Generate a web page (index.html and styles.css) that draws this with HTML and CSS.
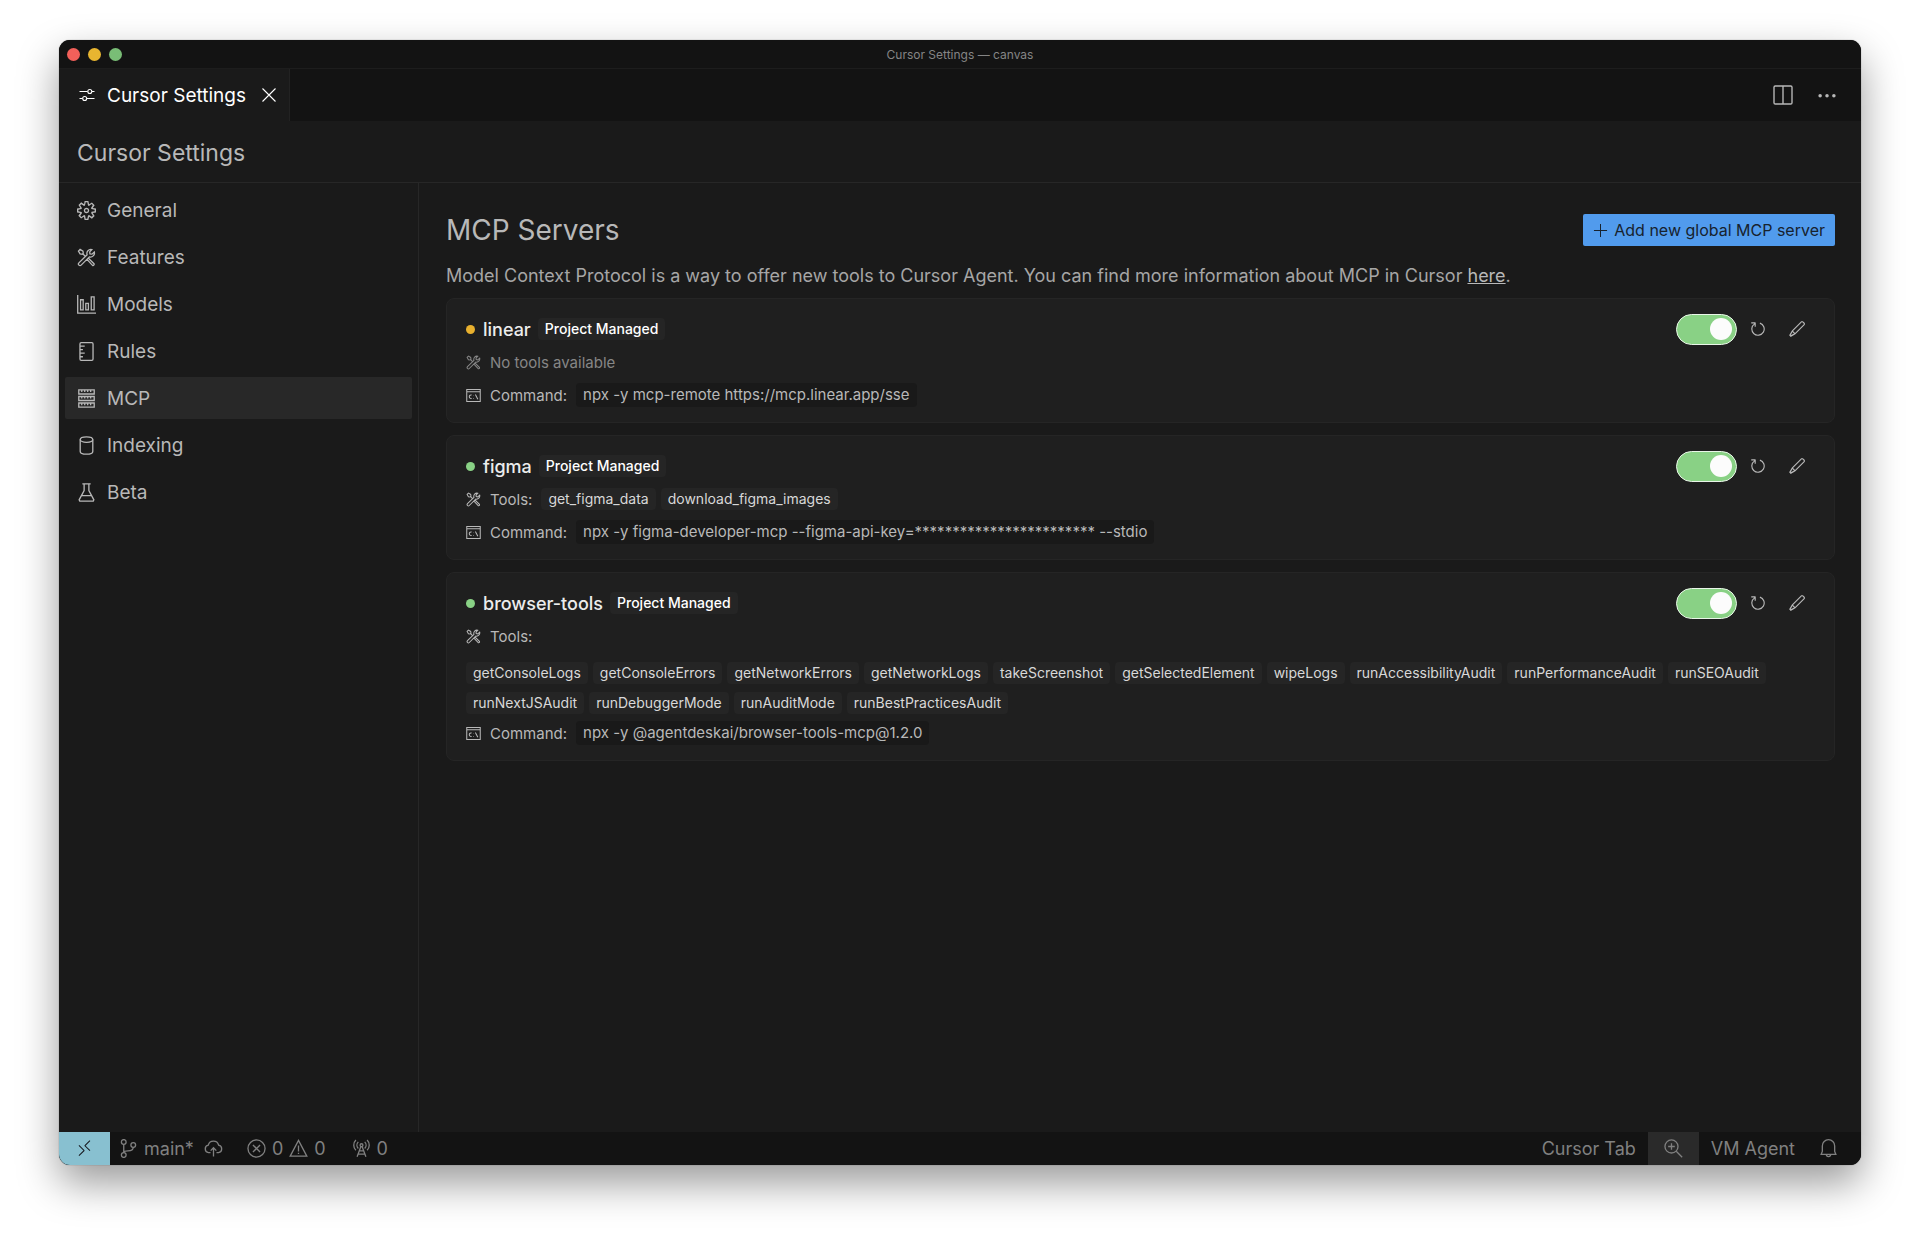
FILE: index.html
```html
<!DOCTYPE html>
<html lang="en">
<head>
    <meta charset="UTF-8">
    <meta name="viewport" content="width=device-width, initial-scale=1.0">
    <title>Cursor Settings — canvas</title>
    <link rel="stylesheet" href="styles.css">
</head>
<body>

<!-- shared icons -->
<svg class="sprite" aria-hidden="true">
    <symbol id="tools" viewBox="0 0 16 16">
        <path class="line" d="M1.2 2.6 2.6 1.2 5 2.6 5.3 4.4 4.4 5.3 2.6 5zM5 5l2 2M9.2 8.2 14.3 13.2a1 1 0 0 1-1.3 1.4L8.2 9.4M14.6 3.4 12.6 5.2 10.9 4.9 10.7 3.3 12.5 1.3a3.4 3.4 0 0 0-4 4.4L1.6 12.5a1.3 1.3 0 0 0 1.9 1.9l6.9-6.9a3.4 3.4 0 0 0 4.2-4.1z"/>
    </symbol>
    <symbol id="terminal" viewBox="0 0 16 16">
        <path class="line" d="M.8 1.5h14.4v13H.8zM.8 4h14.4M6 7.5a1.9 1.9 0 1 0 0 3.6M8 7.6v.5M8 10.6v.5M10 7l2.6 5"/>
    </symbol>
    <symbol id="refresh" viewBox="0 0 16 16">
        <path d="M4.681 3H2V2h3.5l.5.5V6H5V4a5 5 0 1 0 4.53-.761l.302-.954A6 6 0 1 1 4.681 3z"/>
    </symbol>
    <symbol id="pencil" viewBox="0 0 16 16">
        <path d="M13.23 1h-1.46L3.52 9.25l-.16.22L1 13.59 2.41 15l4.12-2.36.22-.16L15 4.23V2.77L13.23 1zM2.41 13.59l1.51-3 1.45 1.45-2.96 1.55zm3.83-2.06L4.47 9.76l8-8 1.77 1.77-8 8z"/>
    </symbol>
</svg>

<div class="window">
    <header class="titlebar">
        <div class="lights">
            <span class="light red"></span>
            <span class="light yellow"></span>
            <span class="light green"></span>
        </div>
        <span class="window-title">Cursor Settings — canvas</span>
    </header>

    <div class="tabs">
        <div class="tab">
            <svg class="icon small" viewBox="0 0 16 16"><path class="line" d="M.5 4.5h8M13 4.5h2.5M.5 11.5h3M8 11.5h7.5"/><circle class="line" cx="10.8" cy="4.5" r="2"/><circle class="line" cx="5.7" cy="11.5" r="2"/></svg>
            <span>Cursor Settings</span>
            <button class="icon-button" aria-label="Close"><svg class="icon small" viewBox="0 0 16 16"><path class="line" d="M1.5 1.5l13 13M14.5 1.5l-13 13"/></svg></button>
        </div>
        <div class="tab-actions">
            <button class="icon-button" aria-label="Split editor"><svg class="icon large" viewBox="0 0 16 16"><rect class="line" x=".8" y=".8" width="14.4" height="14.4" rx="1"/><path class="line" d="M8 .8v14.4"/></svg></button>
            <button class="icon-button" aria-label="More"><svg class="icon large" viewBox="0 0 16 16"><circle cx="2.5" cy="8.5" r="1.4"/><circle cx="8" cy="8.5" r="1.4"/><circle cx="13.5" cy="8.5" r="1.4"/></svg></button>
        </div>
    </div>

    <div class="page-header">Cursor Settings</div>

    <div class="body">
        <nav class="sidebar">
            <button class="nav-item">
                <svg class="icon" viewBox="1 1 14 14"><path d="M9.1 4.4L8.6 2H7.4l-.5 2.4-.7.3-2-1.3-.9.8 1.3 2-.2.7-2.4.5v1.2l2.4.5.3.8-1.3 2 .8.8 2-1.3.8.3.4 2.3h1.2l.5-2.4.8-.3 2 1.3.8-.8-1.3-2 .3-.8 2.3-.4V7.4l-2.4-.5-.3-.8 1.3-2-.8-.8-2 1.3-.7-.2zM9.4 1l.5 2.4L12 2.1l2 2-1.4 2.1 2.4.4v2.8l-2.4.5L14 12l-2 2-2.1-1.4-.5 2.4H6.6l-.5-2.4L4 13.9l-2-2 1.4-2.1L1 9.4V6.6l2.4-.5L2.1 4l2-2 2.1 1.4.4-2.4h2.8zm.6 7c0 1.1-.9 2-2 2s-2-.9-2-2 .9-2 2-2 2 .9 2 2zM8 9c.6 0 1-.4 1-1s-.4-1-1-1-1 .4-1 1 .4 1 1 1z"/></svg>
                General
            </button>
            <button class="nav-item">
                <svg class="icon"><use href="#tools"/></svg>
                Features
            </button>
            <button class="nav-item">
                <svg class="icon" viewBox="0 0 16 16"><path class="line" d="M.6 0v15.2H16M3 4h2.2v8.6H3zM7.4 7h2.2v5.6H7.4zM12 1.5h2.4v11.1H12z"/></svg>
                Models
            </button>
            <button class="nav-item">
                <svg class="icon" viewBox="0 0 16 16"><rect class="line" x="2.5" y=".6" width="11" height="14.8" rx="1"/><path class="line" d="M2.5 3.4h4M2.5 6.4h2.5M2.5 9.4h4M2.5 12.4h2.5"/></svg>
                Rules
            </button>
            <button class="nav-item active">
                <svg class="icon" viewBox="0 0 16 16"><path class="line" d="M1.5.8h13v3.4h-13zM1.5 6.3h13v3.4h-13zM1.5 11.8h13v3.4h-13zM4 1v1.6M6.5 1v1.6M9 1v1.6M11.5 1v1.6M4 6.5v1.6M6.5 6.5v1.6M9 6.5v1.6M11.5 6.5v1.6M4 12v1.6M6.5 12v1.6M9 12v1.6M11.5 12v1.6"/></svg>
                MCP
            </button>
            <button class="nav-item">
                <svg class="icon" viewBox="0 0 16 16"><ellipse class="line" cx="8" cy="3" rx="5.3" ry="2.3"/><path class="line" d="M2.7 3v10c0 1.3 2.3 2.3 5.3 2.3s5.3-1 5.3-2.3V3"/></svg>
                Indexing
            </button>
            <button class="nav-item">
                <svg class="icon" viewBox="0 0 16 16"><path class="line" d="M4.5.7h7M6 .7v5.6L1.8 14.2l.5 1h11.4l.5-1L10 6.3V.7M4 10.7h8"/></svg>
                Beta
            </button>
        </nav>

        <main class="content">
            <div class="heading">
                <h1>MCP Servers</h1>
                <button class="add-button">
                    <svg class="icon tiny" viewBox="0 0 16 16"><path class="line" d="M8 1v14M1 8h14"/></svg>
                    Add new global MCP server
                </button>
            </div>
            <p class="intro">Model Context Protocol is a way to offer new tools to Cursor Agent. You can find more information about MCP in Cursor <a href="#">here</a>.</p>

            <section class="server">
                <div class="server-head">
                    <span class="dot waiting"></span>
                    <h2>linear</h2>
                    <span class="tag managed">Project Managed</span>
                    <div class="actions">
                        <input type="checkbox" class="toggle" aria-label="Enable linear" checked>
                        <button class="icon-button" aria-label="Refresh"><svg class="icon action"><use href="#refresh"/></svg></button>
                        <button class="icon-button" aria-label="Edit"><svg class="icon action"><use href="#pencil"/></svg></button>
                    </div>
                </div>
                <div class="row muted">
                    <svg class="icon tiny"><use href="#tools"/></svg>
                    <span>No tools available</span>
                </div>
                <div class="row">
                    <svg class="icon tiny"><use href="#terminal"/></svg>
                    <span>Command:</span>
                    <span class="command">npx -y mcp-remote https://mcp.linear.app/sse</span>
                </div>
            </section>

            <section class="server">
                <div class="server-head">
                    <span class="dot"></span>
                    <h2>figma</h2>
                    <span class="tag managed">Project Managed</span>
                    <div class="actions">
                        <input type="checkbox" class="toggle" aria-label="Enable figma" checked>
                        <button class="icon-button" aria-label="Refresh"><svg class="icon action"><use href="#refresh"/></svg></button>
                        <button class="icon-button" aria-label="Edit"><svg class="icon action"><use href="#pencil"/></svg></button>
                    </div>
                </div>
                <div class="row">
                    <svg class="icon tiny"><use href="#tools"/></svg>
                    <span>Tools:</span>
                    <div class="tag-list">
                        <span class="tag">get_figma_data</span>
                        <span class="tag">download_figma_images</span>
                    </div>
                </div>
                <div class="row">
                    <svg class="icon tiny"><use href="#terminal"/></svg>
                    <span>Command:</span>
                    <span class="command">npx -y figma-developer-mcp --figma-api-key=************************ --stdio</span>
                </div>
            </section>

            <section class="server">
                <div class="server-head">
                    <span class="dot"></span>
                    <h2>browser-tools</h2>
                    <span class="tag managed">Project Managed</span>
                    <div class="actions">
                        <input type="checkbox" class="toggle" aria-label="Enable browser-tools" checked>
                        <button class="icon-button" aria-label="Refresh"><svg class="icon action"><use href="#refresh"/></svg></button>
                        <button class="icon-button" aria-label="Edit"><svg class="icon action"><use href="#pencil"/></svg></button>
                    </div>
                </div>
                <div class="row">
                    <svg class="icon tiny"><use href="#tools"/></svg>
                    <span>Tools:</span>
                </div>
                <div class="tag-list wide">
                    <span class="tag">getConsoleLogs</span>
                    <span class="tag">getConsoleErrors</span>
                    <span class="tag">getNetworkErrors</span>
                    <span class="tag">getNetworkLogs</span>
                    <span class="tag">takeScreenshot</span>
                    <span class="tag">getSelectedElement</span>
                    <span class="tag">wipeLogs</span>
                    <span class="tag">runAccessibilityAudit</span>
                    <span class="tag">runPerformanceAudit</span>
                    <span class="tag">runSEOAudit</span>
                    <span class="tag">runNextJSAudit</span>
                    <span class="tag">runDebuggerMode</span>
                    <span class="tag">runAuditMode</span>
                    <span class="tag">runBestPracticesAudit</span>
                </div>
                <div class="row">
                    <svg class="icon tiny"><use href="#terminal"/></svg>
                    <span>Command:</span>
                    <span class="command">npx -y @agentdeskai/browser-tools-mcp@1.2.0</span>
                </div>
            </section>
        </main>
    </div>

    <footer class="statusbar">
        <button class="status remote" aria-label="Remote"><svg class="icon" viewBox="0 0 16 16"><path d="M12.904 9.57L8.928 5.596l3.976-3.976-.619-.62L8 5.286v.619l4.285 4.285.62-.618zM3 5.62l4.072 4.07L3 13.763l.619.618L8 10v-.619L3.619 5 3 5.619z"/></svg></button>
        <button class="status branch">
            <svg class="icon" viewBox="0 0 16 16"><circle class="line" cx="4" cy="2.5" r="2"/><circle class="line" cx="4" cy="13.5" r="2"/><circle class="line" cx="12" cy="5" r="2"/><path class="line" d="M4 4.5v7M12 7c0 2.5-2 3-4.5 3-2 0-3.3.4-3.5 1.5"/></svg>
            main*
        </button>
        <button class="status publish" aria-label="Publish changes"><svg class="icon" viewBox="0 0 16 16"><path class="line" d="M5.5 11.5H3.8A3.2 3.2 0 0 1 3.6 5.2a4.5 4.5 0 0 1 8.7 0A3.2 3.2 0 0 1 12.2 11.500h-1.700M8 14.800V7.500M5.600 9.800 8 7.400l2.400 2.400"/></svg></button>
        <button class="status problems">
            <svg class="icon" viewBox="0 0 16 16"><circle class="line" cx="8" cy="8" r="7.2"/><path class="line" d="M5 5l6 6M11 5l-6 6"/></svg>
            0
            <svg class="icon" viewBox="0 0 16 16"><path class="line" d="M8 1.200 15 14.500H1zM8 5.500v5M8 11.500v1.200"/></svg>
            0
        </button>
        <button class="status">
            <svg class="icon" viewBox="0 0 16 16"><circle class="line" cx="8" cy="5.2" r="1.2"/><path class="line" d="M7.5 6.4 4.3 15M8.5 6.4l3.2 8.6M6.2 10h3.6M5.2 12.7h5.6M5.3 8a4 4 0 0 1 0-5.6M10.7 8a4 4 0 0 0 0-5.6M3.3 9.5a6 6 0 0 1 0-8.6M12.7 9.5a6 6 0 0 0 0-8.6"/></svg>
            0
        </button>
        <div class="status-right">
            <button class="status">Cursor Tab</button>
            <button class="status zoom" aria-label="Zoom in"><svg class="icon" viewBox="0 0 16 16"><circle class="line" cx="6.3" cy="6.3" r="5.5"/><path class="line" d="M10.3 10.3l5 5M6.3 3.5v5.6M3.5 6.3h5.6"/></svg></button>
            <button class="status">VM Agent</button>
            <button class="status bell" aria-label="Notifications"><svg class="icon" viewBox="0 0 16 16"><path class="line" d="M1.8 13h12.4l-1-2.500V5.800a5.200 5.200 0 0 0-10.400 0v4.700zM6.200 13a1.800 1.800 0 0 0 3.600 0"/></svg></button>
        </div>
    </footer>
</div>

</body>
</html>
```
FILE: styles.css
```css
* {
    box-sizing: border-box;
}

body {
    margin: 0;
    padding: 40px 59px 78px;
    min-height: 100vh;
    display: flex;
    background-color: #fff;
    font-family: Inter, "Liberation Sans", sans-serif;
    font-size: 16px;
    color: #b8b8b8;
}

h1, h2, p {
    margin: 0;
    font-weight: 400;
}

button {
    margin: 0;
    padding: 0;
    border: none;
    background: none;
    color: inherit;
    font: inherit;
    cursor: pointer;
}

.sprite {
    display: none;
}

.icon {
    display: block;
    flex-shrink: 0;
    width: 19px;
    height: 19px;
    fill: currentColor;
}

.icon.tiny {
    width: 15px;
    height: 15px;
}

.icon.small,
.icon.action {
    width: 16px;
    height: 16px;
}

.icon.action {
    width: 18px;
    height: 18px;
}

.icon.large {
    width: 20px;
    height: 20px;
}

.line {
    fill: none;
    stroke: currentColor;
    stroke-width: 1.1;
}

.window {
    flex: 1;
    min-width: 0;
    display: flex;
    flex-direction: column;
    overflow: hidden;
    background-color: #1a1a1a;
    border-radius: 11px;
    box-shadow: 0 0 1px rgba(0, 0, 0, 0.6), 0 18px 40px rgba(0, 0, 0, 0.4);
}

.titlebar {
    display: grid;
    grid-template-columns: 1fr auto 1fr;
    align-items: center;
    height: 28px;
    padding: 0 8px;
    background-color: #131313;
}

.lights {
    display: flex;
    gap: 8px;
}

.light {
    width: 13px;
    height: 13px;
    border-radius: 50%;
}

.red {
    background-color: #f2605a;
}

.yellow {
    background-color: #e8b530;
}

.green {
    background-color: #79bd76;
}

.window-title {
    font-size: 12px;
    color: #858585;
}

.tabs {
    display: flex;
    justify-content: space-between;
    height: 53px;
    background-color: #131313;
    border-top: 1px solid #1d1d1d;
}

.tab {
    display: flex;
    align-items: center;
    gap: 12px;
    padding: 0 12px 0 20px;
    background-color: #1a1a1a;
    border-right: 1px solid #222;
    font-size: 19px;
    color: #fff;
}

.icon-button {
    display: flex;
}

.tab .icon-button {
    margin-left: 3px;
}

.tab-actions {
    display: flex;
    align-items: center;
    gap: 24px;
    padding-right: 24px;
}

.page-header {
    display: flex;
    align-items: center;
    height: 62px;
    padding: 3px 18px 0;
    border-bottom: 1px solid #272727;
    font-size: 23px;
}

.body {
    flex: 1;
    display: flex;
}

.sidebar {
    display: flex;
    flex-direction: column;
    gap: 5px;
    flex: 0 0 360px;
    padding: 6px;
    border-right: 1px solid #272727;
}

.nav-item {
    display: flex;
    align-items: center;
    gap: 11px;
    height: 42px;
    padding: 0 12px;
    border-radius: 2px;
    font-size: 19px;
}

.nav-item.active {
    background-color: #282828;
}

.content {
    flex: 1;
    min-width: 0;
    padding: 30px 26px 24px 27px;
}

.heading {
    display: flex;
    align-items: center;
    justify-content: space-between;
}

.heading h1 {
    font-size: 28px;
    line-height: 34px;
}

.add-button {
    display: flex;
    align-items: center;
    gap: 6px;
    height: 32px;
    padding: 0 10px;
    border-radius: 2px;
    background-color: #519bed;
    color: #17222e;
}

.intro {
    margin: 17px 0 10px;
    font-size: 18px;
    line-height: 24px;
    color: #a6a6a6;
}

.intro a {
    color: #b8b8b8;
}

.server {
    display: flex;
    flex-direction: column;
    gap: 5px;
    padding: 16px 28px 13px 19px;
    border: 1px solid #252525;
    border-radius: 8px;
    background-color: #1f1f1f;
}

.server + .server {
    margin-top: 12px;
}

.server-head {
    display: flex;
    align-items: center;
    height: 28px;
}

.server-head h2 {
    margin: 0 7px 0 8px;
    font-size: 18px;
    font-weight: 500;
    color: #ececec;
}

.dot {
    width: 9px;
    height: 9px;
    border-radius: 50%;
    background-color: #89d185;
}

.dot.waiting {
    background-color: #e8b02e;
}

.tag {
    padding: 0 7px;
    border-radius: 4px;
    background-color: #252525;
    font-size: 14px;
    line-height: 22px;
    color: #d8d8d8;
}

.tag.managed {
    font-weight: 500;
    color: #fff;
}

.actions {
    display: flex;
    align-items: center;
    gap: 21px;
    margin-left: auto;
}

.toggle {
    appearance: none;
    display: flex;
    justify-content: flex-end;
    align-items: center;
    width: 61px;
    height: 31px;
    margin: 0 -9px 0 0;
    padding: 0 4px;
    border: 1px solid #e9f6e8;
    border-radius: 16px;
    background-color: #89d185;
    cursor: pointer;
}

.toggle::before {
    content: "";
    width: 22px;
    height: 22px;
    border-radius: 50%;
    background-color: #fcfcfc;
}

.toggle:not(:checked) {
    justify-content: flex-start;
    background-color: #3a3a3a;
}

.row {
    display: flex;
    align-items: center;
    gap: 9px;
    height: 28px;
    font-size: 15px;
}

.row.muted {
    color: #868686;
}

.tag-list {
    display: flex;
    flex-wrap: wrap;
    gap: 8px 5px;
}

.tag-list.wide {
    padding-top: 7px;
}

.command {
    padding: 0 7px;
    border-radius: 4px;
    background-color: #191919;
    line-height: 24px;
}

.statusbar {
    display: flex;
    height: 33px;
    background-color: #131313;
    font-size: 18px;
    color: #808080;
}

.status {
    display: flex;
    align-items: center;
    gap: 6px;
    padding: 0 12px;
}

.status.remote {
    padding: 0 16px;
    background-color: #88c0d0;
    color: #191c22;
}

.status.branch {
    padding: 0 10px 0 9px;
}

.status.publish {
    padding-left: 0;
}

.status.problems {
    padding-right: 14px;
}

.status-right {
    display: flex;
    margin-left: auto;
}

.status.zoom {
    padding: 0 16px;
    background-color: #2a2a2a;
}

.status.bell {
    padding: 0 23px 0 12px;
}
```
